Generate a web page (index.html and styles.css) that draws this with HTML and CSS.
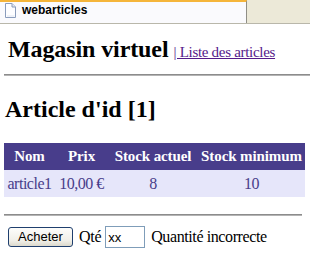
FILE: index.html
```html
<!DOCTYPE html>
<html lang="fr">
<head>
<meta charset="utf-8">
<title>webarticles</title>
<link rel="stylesheet" href="styles.css">
</head>
<body>
<div class="tabbar">
  <div class="tab">
    <svg class="tab-icon" width="11" height="15" viewBox="0 0 11 15">
      <path d="M0.5 0.5 H7 L10.5 4 V14.5 H0.5 Z" fill="#fdfdff" stroke="#8a9cbc"/>
      <path d="M7 0.5 V4 H10.5" fill="#e4e9f3" stroke="#8a9cbc"/>
      <path d="M2 13 H9.5" stroke="#dfe5f0"/>
    </svg>
    <span class="tab-title">webarticles</span>
  </div>
  <div class="tab-rest"></div>
</div>
<div class="page">
  <div class="masthead">
    <h1 class="site-title">Magasin virtuel</h1>
    <a class="nav-link" href="#">| Liste des articles</a>
  </div>
  <hr class="rule rule-wide">
  <h2 class="article-title">Article d'id [1]</h2>
  <table class="articles">
    <thead>
      <tr class="head-row">
        <th class="c1">Nom</th>
        <th class="c2">Prix</th>
        <th class="c3">Stock actuel</th>
        <th class="c4">Stock minimum</th>
      </tr>
    </thead>
    <tbody>
      <tr class="body-row">
        <td>article1</td>
        <td>10,00 €</td>
        <td>8</td>
        <td>10</td>
      </tr>
    </tbody>
  </table>
  <hr class="rule rule-short">
  <form class="buy-form">
    <button class="buy-btn" type="button">Acheter</button>
    <span class="qty-label">Qté</span>
    <input class="qty-input" type="text" value="xx">
    <span class="qty-error">Quantité incorrecte</span>
  </form>
</div>
</body>
</html>
```
FILE: styles.css
```css
html, body {
  margin: 0;
  padding: 0;
  background: #ffffff;
}
body {
  font-family: "Liberation Serif", "Times New Roman", serif;
  font-size: 16px;
  color: #000;
  overflow: hidden;
}
.tabbar {
  display: flex;
  height: 23px;
  border-bottom: 1px solid #b9b7aa;
  background: #ece9d8;
}
.tab {
  width: 247px;
  box-sizing: border-box;
  border-top: 2px solid #f5b53a;
  border-right: 1px solid #8f8e86;
  background: #fafafd;
  display: flex;
  align-items: flex-start;
}
.tab-icon {
  margin: 1px 0 0 5px;
  flex: none;
}
.tab-title {
  margin-left: 6px;
  margin-top: 1px;
  font-family: "Liberation Sans", Arial, sans-serif;
  font-weight: bold;
  font-size: 12px;
  line-height: 15px;
  color: #000;
}
.tab-rest {
  flex: 1;
}
.page {
  padding: 0 0 0 4px;
}
.masthead {
  display: flex;
  align-items: baseline;
  margin-top: 11px;
  padding-left: 4px;
  white-space: nowrap;
}
.site-title {
  margin: 0;
  font-size: 24px;
  line-height: 28px;
  font-weight: bold;
  letter-spacing: -0.1px;
}
.nav-link {
  margin-left: 5px;
  color: #551a8b;
  font-size: 15px;
  letter-spacing: -0.3px;
  text-decoration: underline;
}
.rule {
  height: 0;
  border: 0;
  border-top: 1px solid #8c8c8c;
  border-bottom: 1px solid #b4b4b4;
  margin: 0;
}
.rule-wide {
  margin-top: 11px;
  width: 310px;
}
.rule-short {
  margin-top: 17px;
  width: 298px;
}
.article-title {
  margin: 19px 0 0 1px;
  font-size: 24px;
  line-height: 28px;
  font-weight: bold;
}
.articles {
  margin-top: 20px;
  border-collapse: collapse;
  table-layout: fixed;
  width: 301px;
}
.articles th, .articles td {
  padding: 4px 0;
  line-height: 19px;
  text-align: center;
  white-space: nowrap;
  overflow: visible;
}
.c1 { width: 51px; }
.c2 { width: 53px; }
.c3 { width: 90px; }
.c4 { width: 107px; }
.head-row {
  background: #483d8b;
}
.head-row th {
  color: #ffffff;
  font-weight: bold;
  font-size: 15px;
  letter-spacing: -0.1px;
}
.body-row {
  background: #e6e6fa;
}
.body-row td {
  color: #483d8b;
  font-size: 16px;
  letter-spacing: -0.5px;
}
.buy-form {
  display: flex;
  align-items: center;
  margin: 10px 0 0 4px;
  height: 22px;
}
.buy-btn {
  width: 65px;
  height: 20px;
  padding: 0;
  box-sizing: border-box;
  border: 1px solid #1f3f6e;
  border-radius: 3px;
  background: linear-gradient(#fdfdfb, #f0efe8 70%, #dcd9cc);
  font-family: "Liberation Sans", Arial, sans-serif;
  font-size: 13px;
  color: #000;
  line-height: 18px;
}
.qty-label {
  margin-left: 6px;
  line-height: 18px;
  letter-spacing: -0.3px;
}
.qty-input {
  margin: 0 0 0 4px;
  width: 40px;
  height: 22px;
  box-sizing: border-box;
  border: 1px solid #7f9db9;
  padding: 0 0 0 2px;
  font-family: "Liberation Sans", Arial, sans-serif;
  font-size: 13px;
  color: #000;
  background: #fff;
  outline: none;
}
.qty-error {
  margin-left: 6px;
  line-height: 18px;
  letter-spacing: -0.4px;
}
```
